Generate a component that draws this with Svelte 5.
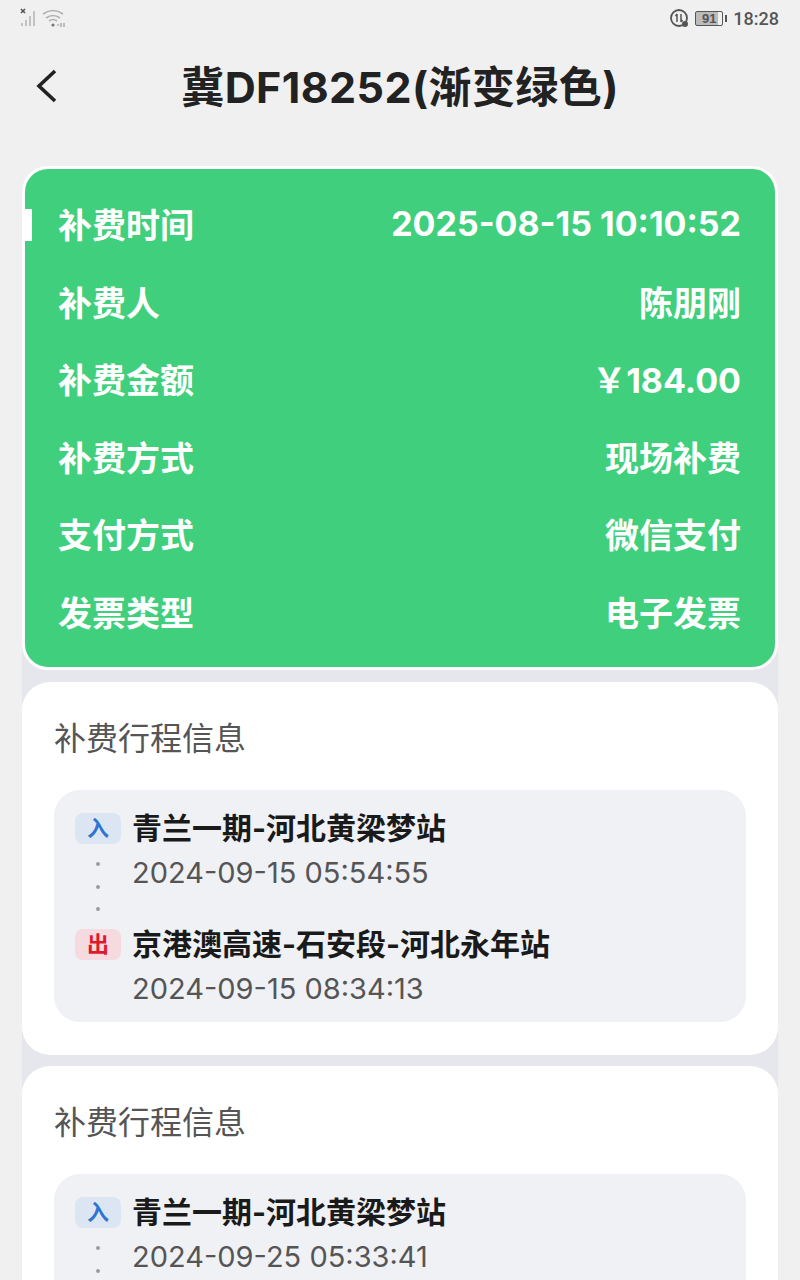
<script lang="ts">
  const rows = [
    ["补费时间", "2025-08-15 10:10:52"],
    ["补费人", "陈朋刚"],
    ["补费金额", "￥184.00"],
    ["补费方式", "现场补费"],
    ["支付方式", "微信支付"],
    ["发票类型", "电子发票"],
  ];

  const trips = [
    {
      inName: "青兰一期-河北黄梁梦站",
      inTime: "2024-09-15 05:54:55",
      outName: "京港澳高速-石安段-河北永年站",
      outTime: "2024-09-15 08:34:13",
    },
    {
      inName: "青兰一期-河北黄梁梦站",
      inTime: "2024-09-25 05:33:41",
    },
  ];
</script>

<main class="page">
  <div class="status">
    <div class="status-left">
      <svg width="46" height="20" viewBox="0 0 46 20" fill="none">
        <path d="M1 1l4 4M5 1L1 5" stroke="#555" stroke-width="1.6" />
        <path d="M2 18v-3M6 18v-6M10 18V8M14 18V3" stroke="#c2c2c2" stroke-width="2" />
        <path d="M23 6q10-7 20 0M26 10q7-5 14 0M29 13q4-3 8 0" stroke="#b0b0b0" stroke-width="1.6" />
        <circle cx="33" cy="17" r="1.6" fill="#777" />
        <path d="M37 17h2M41 15v4M44 15v4" stroke="#999" stroke-width="1.2" />
      </svg>
    </div>
    <div class="status-right">
      <svg width="20" height="20" viewBox="0 0 20 20" fill="none">
        <circle cx="10" cy="10" r="8" stroke="#555" stroke-width="1.8" />
        <path d="M8 6v8M12 6v8M6.5 8L8 6M13.5 12L12 14" stroke="#555" stroke-width="1.5" />
        <circle cx="16" cy="16" r="3" fill="#555" />
      </svg>
      <div class="battery"><span>91</span></div>
      <span class="clock">18:28</span>
    </div>
  </div>

  <header class="nav">
    <svg class="back" width="24" height="36" viewBox="0 0 24 36" fill="none">
      <path d="M20 3L4 18l16 15" stroke="#222" stroke-width="3.6" />
    </svg>
    <h1>冀DF18252(渐变绿色)</h1>
  </header>

  <section class="summary">
    <span class="notch"></span>
    {#each rows as [label, value]}
      <div class="row">
        <span>{label}</span>
        <span>{value}</span>
      </div>
    {/each}
  </section>

  <div class="list">
    {#each trips as trip}
      <section class="card">
        <h2>补费行程信息</h2>
        <div class="trip">
          <div class="stop">
            <span class="tag in">入</span>
            <div class="stop-name">{trip.inName}</div>
          </div>
          <div class="stop-time">{trip.inTime}</div>
          <div class="dots"><i></i><i></i><i></i></div>
          {#if trip.outName}
            <div class="stop">
              <span class="tag out">出</span>
              <div class="stop-name">{trip.outName}</div>
            </div>
            <div class="stop-time">{trip.outTime}</div>
          {/if}
        </div>
      </section>
    {/each}
  </div>
</main>

<style>
  :global(body) {
    margin: 0;
    background: #f0f0f1;
  }

  .page {
    height: 1280px;
    overflow: hidden;
    font-family: Inter, "Noto Sans CJK SC", "Noto Sans", sans-serif;
  }

  .status {
    height: 36px;
    display: flex;
    justify-content: space-between;
    align-items: center;
    padding: 0 21px 0 20px;
  }

  .status-left {
    display: flex;
  }

  .status-right {
    display: flex;
    align-items: center;
    gap: 6px;
    color: #555;
  }

  .battery {
    position: relative;
    width: 26px;
    height: 13px;
    border: 1.5px solid #555;
    border-radius: 2px;
    background: linear-gradient(90deg, #bbb 85%, transparent 85%);
    font: bold 13px/13px "Liberation Sans", sans-serif;
    text-align: center;
    margin-right: 4px;
  }

  .battery::after {
    content: "";
    position: absolute;
    right: -5px;
    top: 3px;
    width: 2px;
    height: 7px;
    background: #555;
  }

  .clock {
    font: 500 18px Roboto, sans-serif;
  }

  .nav {
    height: 100px;
    position: relative;
    display: flex;
    align-items: center;
    justify-content: center;
    margin-top: 1px;
  }

  .back {
    position: absolute;
    left: 35px;
    top: 31px;
  }

  h1 {
    margin: 0;
    font-size: 43px;
    letter-spacing: 0.4px;
    font-weight: 700;
    color: #222;
    line-height: 1;
  }

  .summary {
    position: relative;
    box-sizing: border-box;
    margin: 29px 22px 0;
    height: 504px;
    padding: 16px 34px 0 33px;
    background: #3fcf7d;
    border: 3px solid #fff;
    border-radius: 26px;
    color: #fff;
  }

  .notch {
    position: absolute;
    left: -1px;
    top: 40px;
    width: 8px;
    height: 32px;
    background: #fff;
  }

  .row {
    height: 77.5px;
    display: flex;
    justify-content: space-between;
    align-items: center;
    font-size: 34px;
    font-weight: 700;
  }

  .list {
    margin: -24px 22px 0;
    padding-top: 36px;
    display: flex;
    flex-direction: column;
    gap: 11px;
    background: #e6e7ec;
  }

  .card {
    background: #fff;
    border-radius: 28px;
    padding: 36px 32px 33px;
  }

  h2 {
    margin: 0 0 30px;
    font-size: 32px;
    font-weight: 400;
    color: #555;
    line-height: 42px;
  }

  .trip {
    background: #eff1f5;
    border-radius: 26px;
    padding: 16px 22px 10px 21px;
  }

  .stop {
    display: flex;
    align-items: center;
    gap: 11px;
    height: 44px;
  }

  .tag {
    width: 46px;
    height: 31px;
    border-radius: 8px;
    font-size: 22px;
    line-height: 31px;
    text-align: center;
    font-weight: 700;
  }

  .tag.in {
    background: #dce6f3;
    color: #2f74d0;
  }

  .tag.out {
    background: #f5dadf;
    color: #e0182d;
  }

  .stop-name {
    font-size: 30px;
    font-weight: 700;
    color: #1a1a1a;
    line-height: 44px;
  }

  .stop-time {
    padding-left: 57px;
    font-size: 29px;
    color: #555;
    line-height: 46px;
    height: 46px;
  }

  .dots {
    position: relative;
    height: 26px;
  }

  .dots i {
    position: absolute;
    left: 21px;
    width: 4px;
    height: 4px;
    border-radius: 50%;
    background: #9a9ca2;
  }

  .dots i:nth-child(1) { top: -34px; }
  .dots i:nth-child(2) { top: -11px; }
  .dots i:nth-child(3) { top: 11px; }
</style>
